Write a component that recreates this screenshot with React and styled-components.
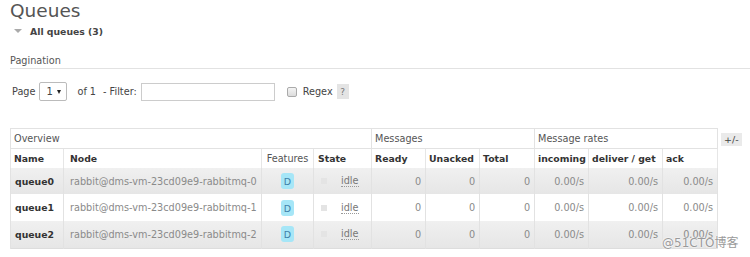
import React from 'react';
import styled, { createGlobalStyle } from 'styled-components';

const GlobalStyle = createGlobalStyle`
  body {
    margin: 0;
    background: #fff;
    font-family: "DejaVu Sans", Verdana, sans-serif;
    color: #484848;
  }
`;

const Page = styled.div`
  position: relative;
  width: 750px;
  height: 257px;
  overflow: hidden;
  padding-left: 10px;
  box-sizing: border-box;
`;

const Title = styled.h1`
  margin: 0;
  font-size: 18.5px;
  font-weight: normal;
  line-height: 22px;
  color: #555;
`;

const Toggle = styled.div`
  display: flex;
  align-items: center;
  height: 16px;
  margin-top: 1px;
  padding-left: 4px;
  gap: 8px;
  font-size: 9.3px;
  font-weight: bold;
  color: #444;
`;

const Arrow = styled.span`
  width: 0;
  height: 0;
  border-left: 4px solid transparent;
  border-right: 4px solid transparent;
  border-top: 4px solid #aaa;
`;

const SectionHead = styled.div`
  margin-top: 15px;
  line-height: 13px;
  padding-bottom: 1px;
  font-size: 9.7px;
  color: #555;
  border-bottom: 1px solid #e2e2e2;
`;

const Controls = styled.div`
  display: flex;
  align-items: center;
  height: 19px;
  margin-top: 13px;
  padding-left: 2px;
  font-size: 9.7px;
  color: #444;
`;

const FakeSelect = styled.span`
  display: inline-flex;
  align-items: center;
  justify-content: space-between;
  box-sizing: border-box;
  width: 28px;
  height: 19px;
  margin-left: 4px;
  padding: 0 5px 0 6px;
  border: 1px solid #bbb;
  border-radius: 2px;
  background: #fff;
  font-size: 10px;
`;

const Caret = styled.span`
  width: 0;
  height: 0;
  border-left: 2.5px solid transparent;
  border-right: 2.5px solid transparent;
  border-top: 4px solid #222;
`;

const Label = styled.span`
  margin-left: ${p => p.$gap || 0}px;
`;

const FilterInput = styled.input`
  box-sizing: border-box;
  width: 134px;
  height: 18px;
  margin-left: 4px;
  border: 1px solid #ccc;
  padding: 0 3px;
  font: inherit;
`;

const Check = styled.span`
  box-sizing: border-box;
  width: 10px;
  height: 10px;
  margin-left: 12px;
  border: 1px solid #aaa;
  border-radius: 2px;
  background: linear-gradient(#f4f4f4, #dcdcdc);
`;

const Help = styled.span`
  display: inline-flex;
  align-items: center;
  justify-content: center;
  width: 12px;
  height: 15px;
  margin-left: 4px;
  background: #e4e4e4;
  color: #777;
  font-size: 9px;
`;

const TableRow = styled.div`
  display: flex;
  align-items: flex-start;
  gap: 3px;
  margin-top: 27px;
`;

const Table = styled.table`
  border-collapse: collapse;
  table-layout: fixed;
  width: 707px;
  border: 1px solid #ddd;
  font-size: 9.7px;
`;

const GroupCell = styled.th`
  height: 19px;
  padding: 0 3px;
  text-align: left;
  font-weight: normal;
  color: #555;
  border: 1px solid #e2e2e2;
  white-space: nowrap;
`;

const HeadCell = styled.th`
  height: 19px;
  padding: 0 ${p => p.$pad || 3}px;
  text-align: ${p => (p.$center ? 'center' : 'left')};
  font-weight: ${p => (p.$light ? 'normal' : 'bold')};
  font-size: ${p => (p.$light ? '9.7px' : '9.3px')};
  color: ${p => (p.$light ? '#555' : '#333')};
  border-left: 1px solid #e6e6e6;
  border-right: 1px solid #e6e6e6;
  white-space: nowrap;
`;

const Row = styled.tr`
  height: ${p => p.$h}px;
  background: ${p => (p.$alt ? 'linear-gradient(#f0f0f0, #e6e6e6)' : '#fff')};
`;

const Cell = styled.td`
  padding: 0 ${p => p.$pad || 4}px;
  text-align: ${p => p.$align || 'left'};
  color: #8a8a8a;
  border-left: 1px solid #e2e2e2;
  border-right: 1px solid #e2e2e2;
  white-space: nowrap;
  overflow: hidden;
`;

const NameCell = styled(Cell)`
  font-weight: bold;
  font-size: 9.3px;
  color: #333;
`;

const Badge = styled.span`
  display: inline-block;
  width: 13px;
  height: 16px;
  line-height: 17px;
  border-radius: 3px;
  background: #a6e6f7;
  color: #3f7fa8;
  text-align: center;
  font-size: 9.5px;
`;

const StateWrap = styled.span`
  display: flex;
  align-items: center;
  gap: 14px;
  padding-left: 3px;
`;

const StateDot = styled.span`
  width: 6px;
  height: 6px;
  background: #e4e4e4;
`;

const Idle = styled.span`
  color: #777;
  border-bottom: 1px dotted #999;
  line-height: 11px;
`;

const ColToggle = styled.span`
  margin-top: 5px;
  padding: 1px 3px;
  background: #eaeaea;
  color: #444;
  font-size: 9.5px;
  line-height: 11px;
`;

const Watermark = styled.span`
  position: absolute;
  left: 662px;
  top: 237px;
  font-size: 12px;
  line-height: 13px;
  color: #9a9a9a;
  font-family: "DejaVu Sans", "Noto Sans CJK SC", sans-serif;
  text-shadow: 0 0 2px #fff, 0 0 2px #fff;
`;

const widths = [53, 198, 52, 58, 54, 54, 55, 54, 74, 55];

const queues = [
  { name: 'queue0', node: 'rabbit@dms-vm-23cd09e9-rabbitmq-0', h: 26 },
  { name: 'queue1', node: 'rabbit@dms-vm-23cd09e9-rabbitmq-1', h: 27 },
  { name: 'queue2', node: 'rabbit@dms-vm-23cd09e9-rabbitmq-2', h: 27 },
];

export default function App() {
  return (
    <Page>
      <GlobalStyle />
      <Title>Queues</Title>
      <Toggle>
        <Arrow />
        <span>All queues (3)</span>
      </Toggle>

      <SectionHead>Pagination</SectionHead>
      <Controls>
        <span>Page</span>
        <FakeSelect>
          1 <Caret />
        </FakeSelect>
        <Label $gap={10}>of 1</Label>
        <Label $gap={7}>- Filter:</Label>
        <FilterInput type="text" />
        <Check />
        <Label $gap={6}>Regex</Label>
        <Help>?</Help>
      </Controls>

      <TableRow>
        <Table>
          <colgroup>
            {widths.map((w, i) => (
              <col key={i} style={{ width: w }} />
            ))}
          </colgroup>
          <thead>
            <tr>
              <GroupCell colSpan={4}>Overview</GroupCell>
              <GroupCell colSpan={3}>Messages</GroupCell>
              <GroupCell colSpan={3}>Message rates</GroupCell>
            </tr>
            <tr>
              <HeadCell>Name</HeadCell>
              <HeadCell $pad={6}>Node</HeadCell>
              <HeadCell $light $center>Features</HeadCell>
              <HeadCell $pad={4}>State</HeadCell>
              <HeadCell>Ready</HeadCell>
              <HeadCell>Unacked</HeadCell>
              <HeadCell>Total</HeadCell>
              <HeadCell>incoming</HeadCell>
              <HeadCell>deliver / get</HeadCell>
              <HeadCell>ack</HeadCell>
            </tr>
          </thead>
          <tbody>
            {queues.map((q, i) => (
              <Row key={q.name} $alt={i !== 1} $h={q.h}>
                <NameCell>{q.name}</NameCell>
                <Cell $pad={6}>{q.node}</Cell>
                <Cell $align="center">
                  <Badge>D</Badge>
                </Cell>
                <Cell>
                  <StateWrap>
                    <StateDot />
                    <Idle>idle</Idle>
                  </StateWrap>
                </Cell>
                <Cell $align="right">0</Cell>
                <Cell $align="right">0</Cell>
                <Cell $align="right">0</Cell>
                <Cell $align="right">0.00/s</Cell>
                <Cell $align="right">0.00/s</Cell>
                <Cell $align="right">0.00/s</Cell>
              </Row>
            ))}
          </tbody>
        </Table>
        <ColToggle>+/-</ColToggle>
      </TableRow>

      <Watermark>@51CTO博客</Watermark>
    </Page>
  );
}
